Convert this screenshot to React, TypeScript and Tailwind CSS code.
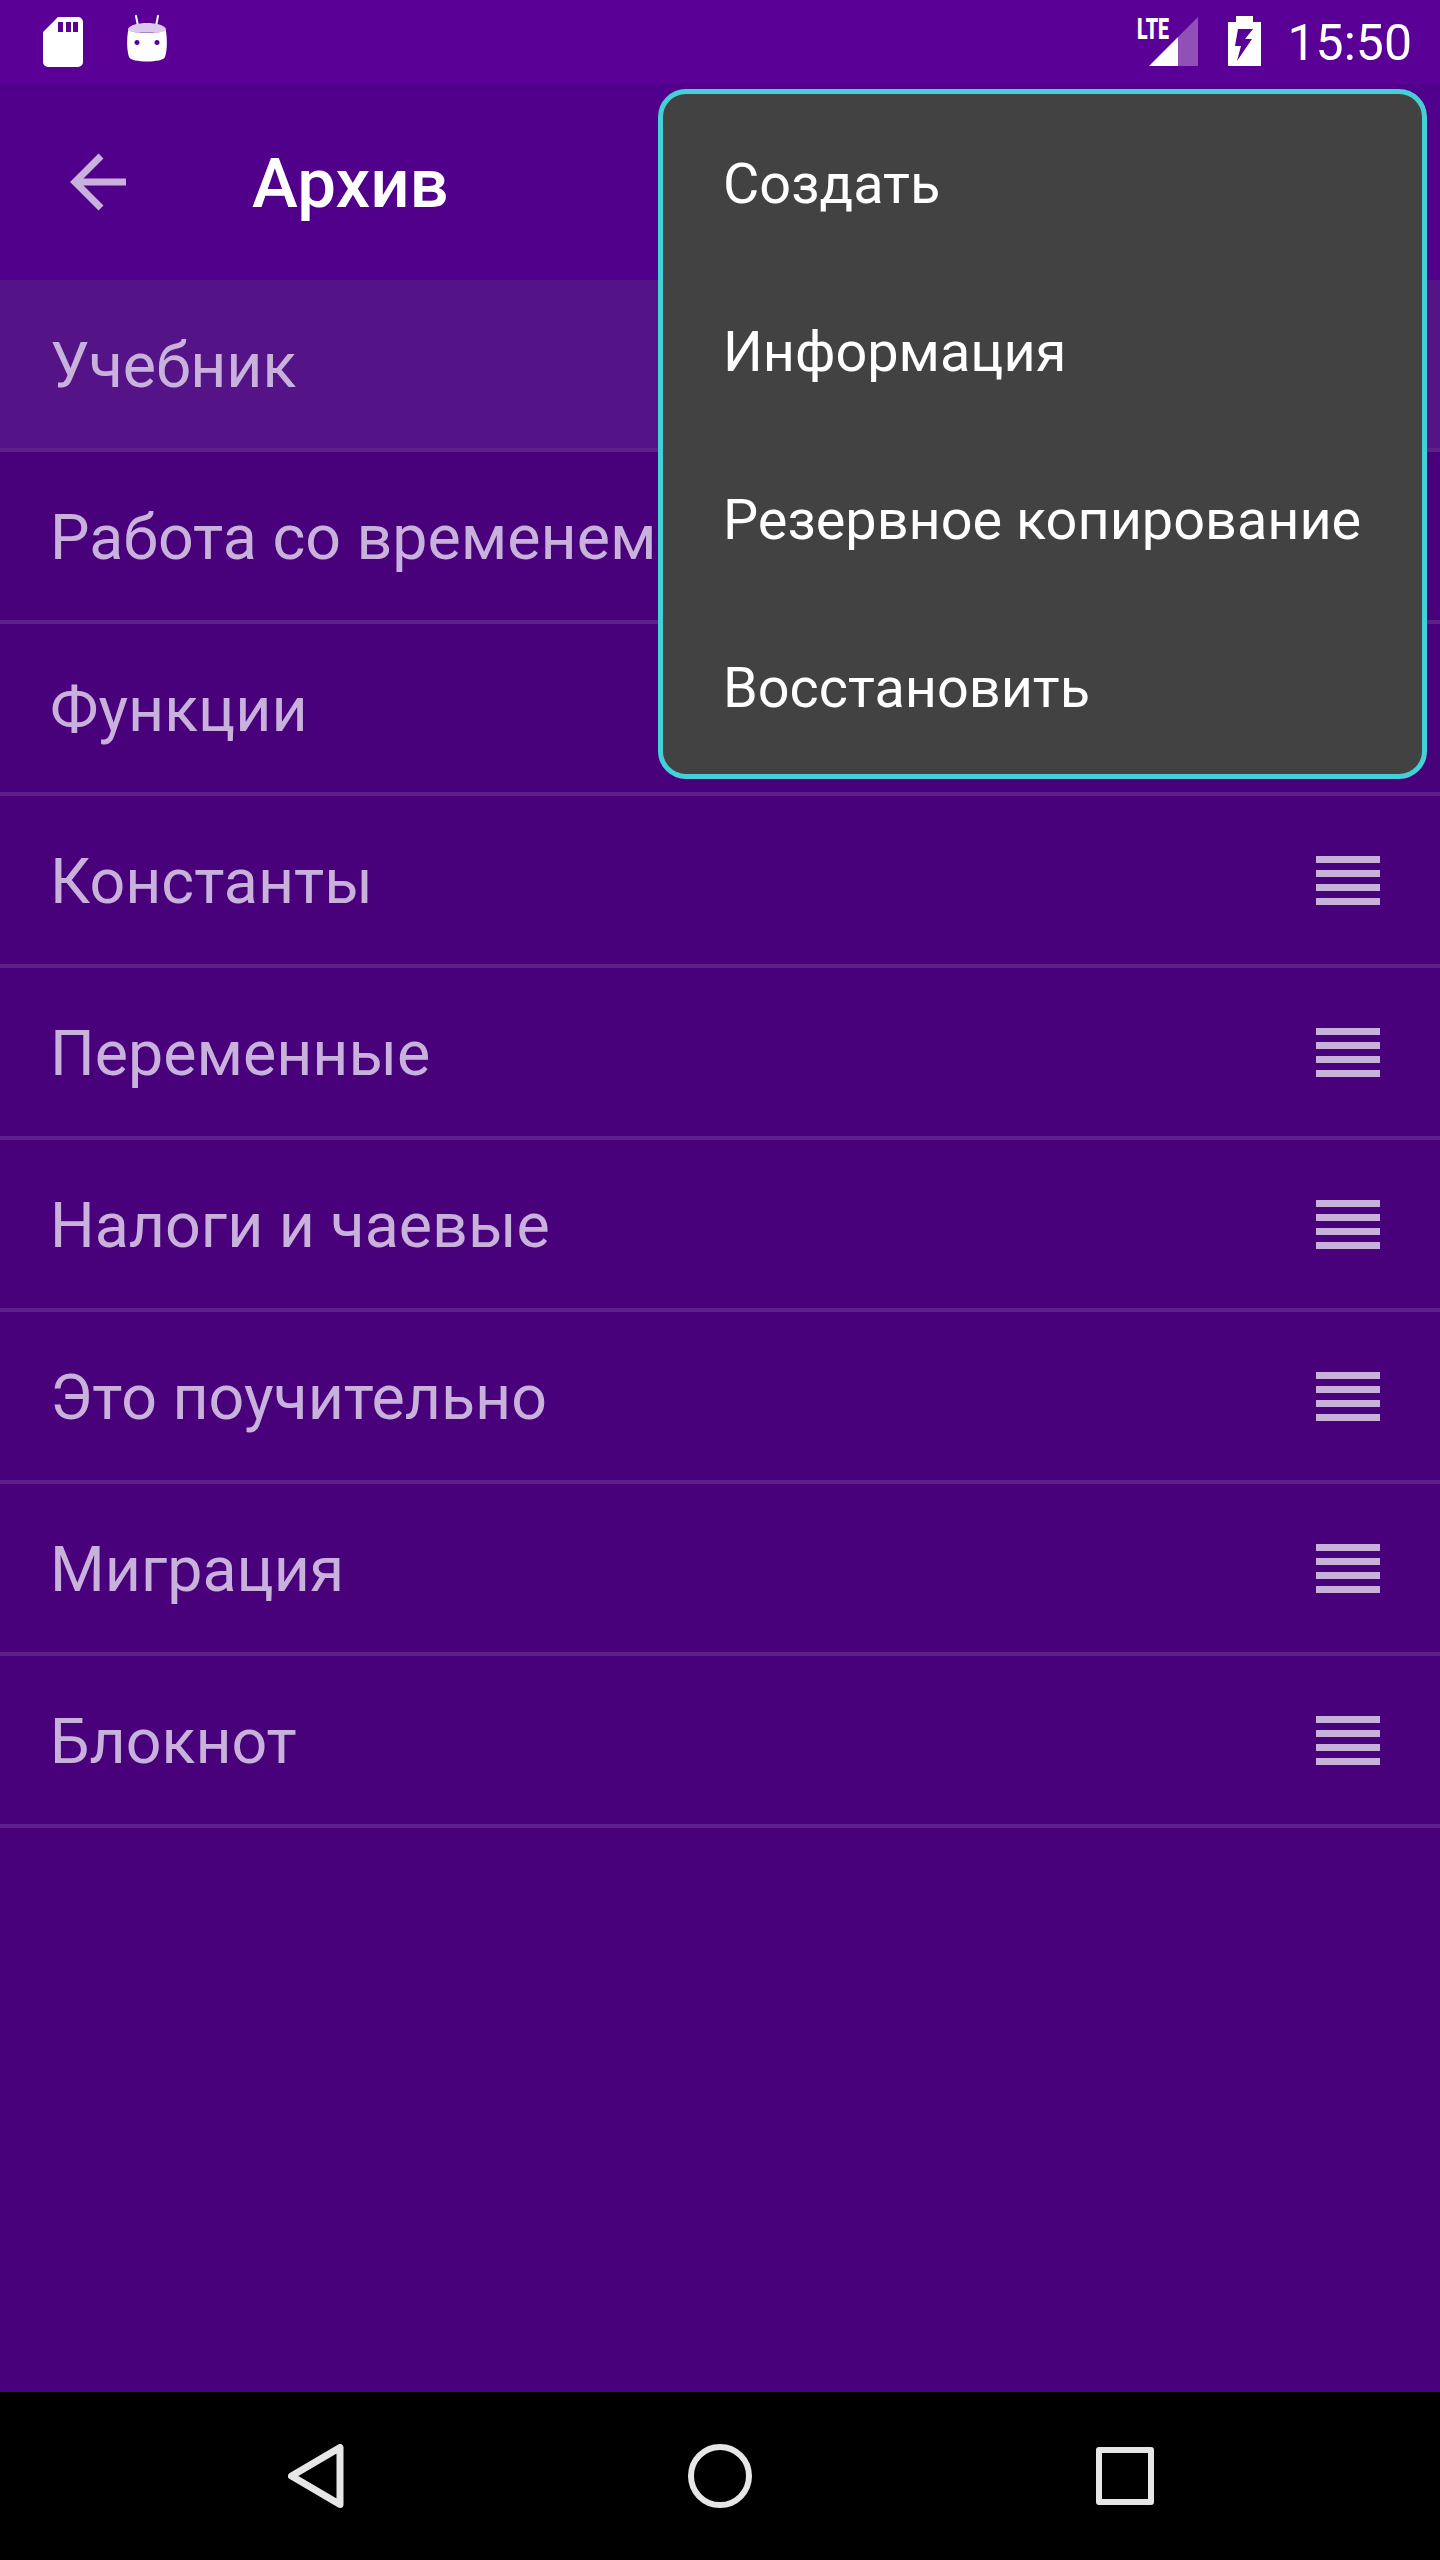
const items = [
  "Учебник",
  "Работа со временем",
  "Функции",
  "Константы",
  "Переменные",
  "Налоги и чаевые",
  "Это поучительно",
  "Миграция",
  "Блокнот",
];

const menu = ["Создать", "Информация", "Резервное копирование", "Восстановить"];

function SdCard() {
  return (
    <svg width="40" height="50" viewBox="0 0 40 50">
      <path
        fill="#fff"
        fillRule="evenodd"
        d="M15 0H35a5 5 0 0 1 5 5V45a5 5 0 0 1-5 5H5a5 5 0 0 1-5-5V15ZM15 5V15H20V5ZM23 5V15H28V5ZM30 5V15H35V5Z"
      />
    </svg>
  );
}

function Marshmallow() {
  return (
    <svg width="40" height="48" viewBox="0 0 40 48" className="mb-[6px]">
      <path d="M9 1 11 11M31 1 29 11" stroke="#fff" strokeWidth="2" strokeLinecap="round" />
      <path fill="#dcc8ea" d="M1 14C4 6 36 6 39 14L39 17H1Z" />
      <path
        fill="#fff"
        fillRule="evenodd"
        d="M1 16C8 18 32 18 39 16C40.5 26 40 36 38 42C36 48 4 48 2 42C0 36-.5 26 1 16ZM10 25a2.5 2.5 0 1 0 .01 0ZM30 25a2.5 2.5 0 1 0 .01 0Z"
      />
    </svg>
  );
}

function Signal() {
  return (
    <svg width="61" height="50" viewBox="0 0 61 50" className="overflow-visible">
      <path fill="#9050b8" d="M41 20 61 0V49H41Z" />
      <path fill="#fff" d="M12 49 41 20V49Z" />
      <text
        x="0"
        y="22"
        fill="#fff"
        fontFamily="Roboto, sans-serif"
        fontWeight="900"
        fontSize="29"
        textLength="32"
        lengthAdjust="spacingAndGlyphs"
      >
        LTE
      </text>
    </svg>
  );
}

function Battery() {
  return (
    <svg width="33" height="50" viewBox="0 0 33 50" className="mb-[2px]">
      <path
        fill="#fff"
        fillRule="evenodd"
        d="M8 0H25V6H33V50H0V6H8ZM10 13 7 30H13L9 45 24 23H17L25 13Z"
      />
    </svg>
  );
}

function ListRow({ label, first }: { label: string; first: boolean }) {
  return (
    <div
      className={`flex h-[172px] items-center justify-between border-b-4 border-[#5e2088] pl-[50px] pr-[60px] ${first ? "bg-[#541487]" : ""}`}
    >
      <span className="pt-[5px] text-[62.7px] text-[#c8b2dc]">{label}</span>
      <div className="flex w-[64px] flex-col gap-[7px]">
        <div className="h-[7px] bg-[#c8b2dc]" />
        <div className="h-[7px] bg-[#c8b2dc]" />
        <div className="h-[7px] bg-[#c8b2dc]" />
        <div className="h-[7px] bg-[#c8b2dc]" />
      </div>
    </div>
  );
}

export default function App() {
  return (
    <div className="relative flex h-[2560px] w-[1440px] flex-col overflow-hidden bg-[#49007b] font-['Roboto',sans-serif]">
      {/* Status bar */}
      <div className="flex h-[84px] shrink-0 items-center bg-[#5a0096] pl-[43px] pr-[28px]">
        <div className="flex items-center gap-[44px]">
          <SdCard />
          <Marshmallow />
        </div>
        <div className="ml-auto flex items-center">
          <Signal />
          <div className="ml-[30px] flex items-center">
            <Battery />
          </div>
          <span className="ml-[26px] pt-[2px] text-[50px] leading-none text-white">15:50</span>
        </div>
      </div>

      {/* Toolbar */}
      <div className="flex h-[196px] shrink-0 items-center bg-[#50008a] pl-[70px]">
        <svg width="57" height="58" viewBox="0 0 57 58">
          <path d="M56 29H6M31 3 5 29 31 55" fill="none" stroke="#c8b2dc" strokeWidth="7" />
        </svg>
        <span className="ml-[125px] pt-[3px] text-[69px] font-medium text-white">Архив</span>
      </div>

      {/* List */}
      <div className="flex-1">
        {items.map((label, i) => (
          <ListRow key={label} label={label} first={i === 0} />
        ))}
      </div>

      {/* Nav bar */}
      <div className="flex h-[168px] shrink-0 items-center justify-center bg-black">
        <div className="flex w-[404px] justify-center">
          <svg width="56" height="64" viewBox="0 0 56 64">
            <path d="M52 3.5V60.5L3.5 32Z" fill="none" stroke="#e6e6e6" strokeWidth="7" strokeLinejoin="round" />
          </svg>
        </div>
        <div className="flex w-[404px] justify-center">
          <div className="h-[64px] w-[64px] rounded-full border-[6px] border-[#e6e6e6]" />
        </div>
        <div className="flex w-[404px] justify-center pl-[2px]">
          <div className="h-[58px] w-[58px] rounded-[3px] border-[6px] border-[#e6e6e6]" />
        </div>
      </div>

      {/* Overflow menu */}
      <div className="absolute left-[658px] top-[89px] flex h-[690px] w-[769px] flex-col justify-center rounded-[28px] border-[5px] border-[#45d0d8] bg-[#424242]">
        {menu.map((label) => (
          <div key={label} className="flex h-[168px] items-center pl-[60px] pt-[6px] text-[55.8px] text-white">
            {label}
          </div>
        ))}
      </div>
    </div>
  );
}
